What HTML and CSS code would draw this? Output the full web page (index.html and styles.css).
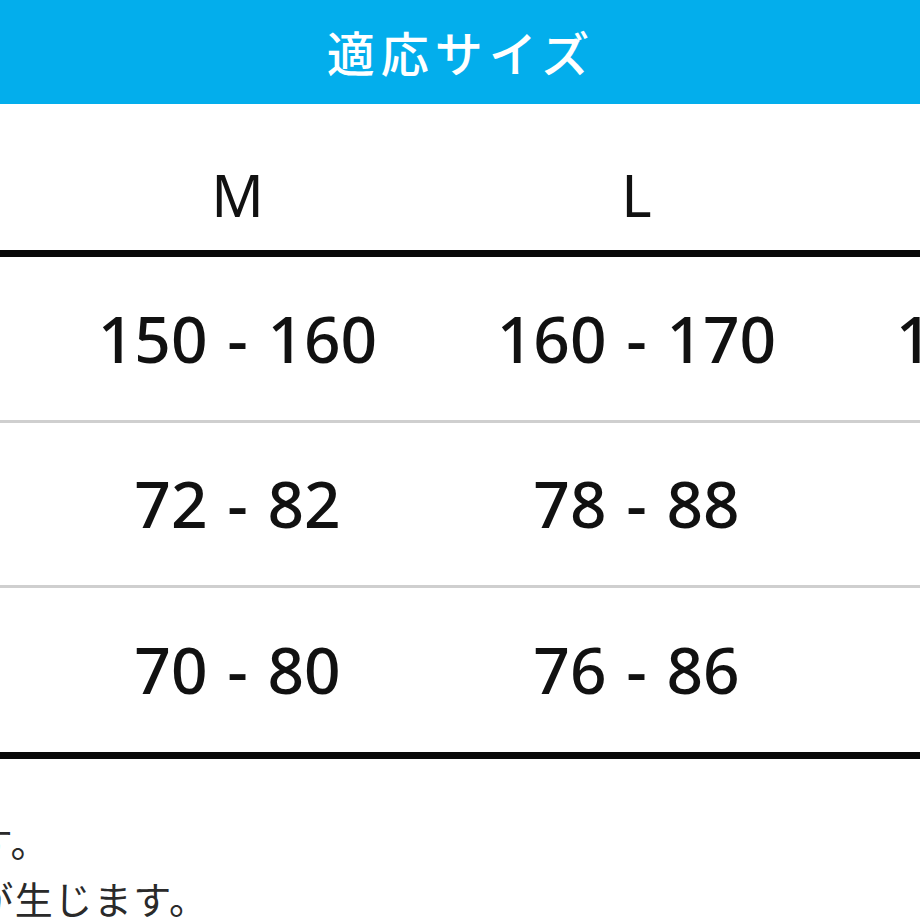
FILE: index.html
```html
<!DOCTYPE html>
<html lang="ja">
<head>
<meta charset="utf-8">
<title>適応サイズ</title>
<link rel="stylesheet" href="styles.css">
</head>
<body>
<div class="sheet">
  <div class="banner"><h1 class="title">適応サイズ</h1></div>
  <div class="table-clip">
    <div class="size-table">
      <div class="row head">
        <div class="cell label">サイズ</div>
        <div class="cell">M</div>
        <div class="cell">L</div>
        <div class="cell">XL</div>
      </div>
      <div class="row data r1">
        <div class="cell label">身長</div>
        <div class="cell">150 - 160</div>
        <div class="cell">160 - 170</div>
        <div class="cell">170 - 180</div>
      </div>
      <div class="row data r2">
        <div class="cell label">バスト</div>
        <div class="cell">72 - 82</div>
        <div class="cell">78 - 88</div>
        <div class="cell">84 - 94</div>
      </div>
      <div class="row data r3">
        <div class="cell label">ウエスト</div>
        <div class="cell">70 - 80</div>
        <div class="cell">76 - 86</div>
        <div class="cell">82 - 92</div>
      </div>
    </div>
  </div>
  <div class="notes">
    <p class="note">※サイズは目安です。</p>
    <p class="note">※素材により誤差が生じます。</p>
  </div>
</div>
</body>
</html>
```
FILE: styles.css
```css
html, body {
  margin: 0;
  padding: 0;
  background: #ffffff;
}
.sheet {
  width: 920px;
  height: 920px;
  overflow: hidden;
  background: #ffffff;
}
.banner {
  height: 104px;
  background: #03aeec;
  display: flex;
  align-items: center;
  justify-content: center;
}
.title {
  margin: 0;
  padding: 0 0 2px 2px;
  font-family: "Noto Sans CJK JP", "Noto Sans", sans-serif;
  font-weight: 500;
  font-size: 48px;
  line-height: 1;
  letter-spacing: 6px;
  color: #ffffff;
}
.table-clip {
  width: 920px;
  overflow: hidden;
}
.size-table {
  width: 1596px;
  margin-left: -361px;
  display: flex;
  flex-direction: column;
}
.row {
  display: grid;
  grid-template-columns: repeat(4, 399px);
  align-items: center;
  color: #111111;
  font-family: "Noto Sans", "Open Sans", sans-serif;
}
.cell {
  text-align: center;
  line-height: 1;
  white-space: nowrap;
}
.head {
  height: 146px;
  align-items: start;
  border-bottom: 7px solid #080808;
  font-size: 58px;
}
.head .cell {
  padding-top: 62px;
}
.data {
  font-size: 64px;
  font-weight: 500;
  word-spacing: 3px;
}
.r1 { height: 163px; border-bottom: 3px solid #cfcfcf; }
.r2 { height: 162px; border-bottom: 3px solid #cfcfcf; }
.r3 { height: 164px; border-bottom: 7px solid #080808; }
.notes {
  padding-top: 53px;
  width: 920px;
  overflow: hidden;
}
.note {
  margin: 0 0 0 -340px;
  font-family: "Noto Sans CJK JP", "Noto Sans", sans-serif;
  font-size: 38px;
  line-height: 57px;
  letter-spacing: 1.5px;
  color: #2a2a2a;
  white-space: nowrap;
}
```
